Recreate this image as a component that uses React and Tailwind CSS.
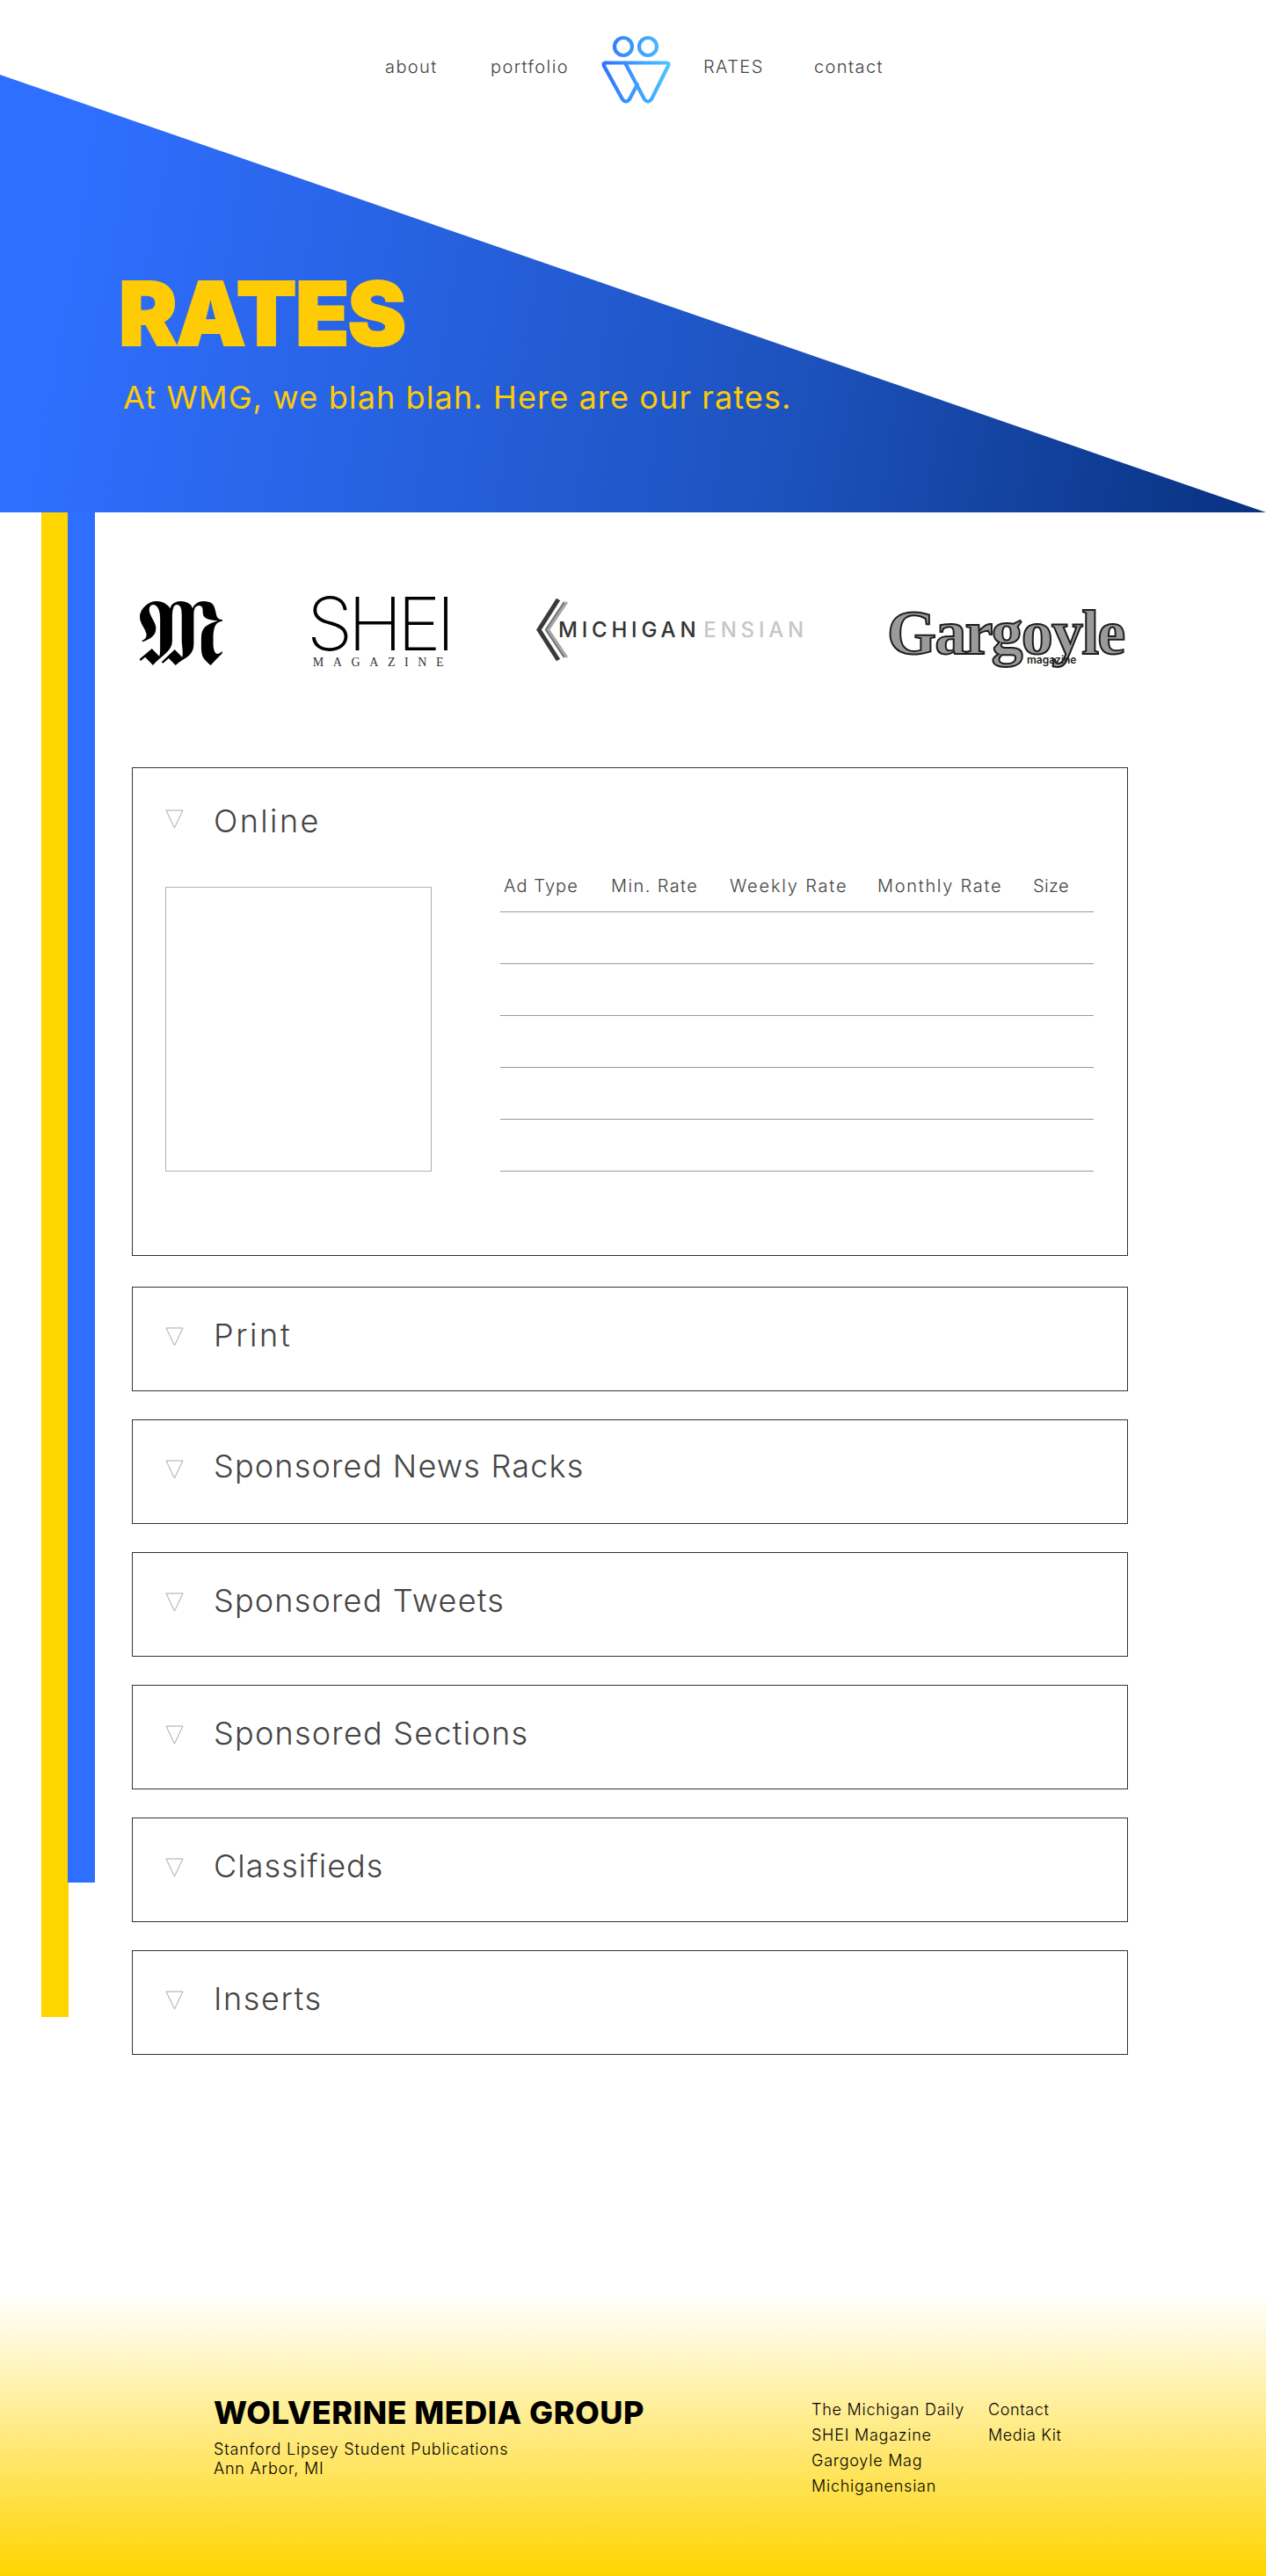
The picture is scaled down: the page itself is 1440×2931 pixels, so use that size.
const navFont = "font-['Inter','Liberation_Sans',sans-serif]";

const sections = [
  { name: "Print", titleClass: "pt-[32px] tracking-[2.6px]" },
  { name: "Sponsored News Racks", titleClass: "pt-[30px] tracking-[1.2px]" },
  { name: "Sponsored Tweets", titleClass: "pt-[32px] tracking-[1.2px]" },
  { name: "Sponsored Sections", titleClass: "pt-[32px] tracking-[1.25px]" },
  { name: "Classifieds", titleClass: "pt-[32px] tracking-[1.05px]" },
  { name: "Inserts", titleClass: "pt-[32px] tracking-[1.6px]" },
];

const columns = [
  { label: "Ad Type", cls: "tracking-[1.1px]" },
  { label: "Min. Rate", cls: "tracking-[1.4px]" },
  { label: "Weekly Rate", cls: "tracking-[1.8px]" },
  { label: "Monthly Rate", cls: "tracking-[1.7px]" },
  { label: "Size", cls: "tracking-[0.4px]" },
];

function WmgLogo() {
  return (
    <svg width="81" height="79" viewBox="0 0 81 79" fill="none">
      <defs>
        <linearGradient id="wmg" gradientUnits="userSpaceOnUse" x1="0" y1="0" x2="81" y2="0">
          <stop offset="0" stopColor="#2f6fff" />
          <stop offset="1" stopColor="#4fc8ff" />
        </linearGradient>
      </defs>
      <g stroke="url(#wmg)" strokeWidth="4.2" strokeLinejoin="round" strokeLinecap="round">
        <circle cx="26" cy="13" r="10" />
        <circle cx="54" cy="13" r="10" />
        <path d="M6 31.5H75Q78.5 31.5 77.2 34.5L58 73Q54 78 50 73L28 31.5" />
        <path d="M6 31.5Q2.5 31.5 4 35L25 73Q29 78 33 73L42 56" />
      </g>
    </svg>
  );
}

function Arrow() {
  return (
    <svg width="21" height="22" viewBox="0 0 21 22" fill="none" className="shrink-0">
      <path d="M1 1H20L10.5 21Z" stroke="#a8a8a8" strokeWidth="1" />
    </svg>
  );
}

function Chevron() {
  return (
    <svg width="36" height="72" viewBox="0 0 36 72" fill="none" className="shrink-0">
      <path d="M25 1L3 35.5L25 70" stroke="#3a3a3a" strokeWidth="5" />
      <path d="M32 4L11 35.5L32 67" stroke="#777777" strokeWidth="2.4" />
      <path d="M35 4L14 35.5L35 67" stroke="#a5a5a5" strokeWidth="2.4" />
    </svg>
  );
}

function Logos() {
  return (
    <div className="flex items-center h-[84px] pl-[8px]">
      <div className="w-[96px] h-[84px] flex items-center justify-center text-[106px] leading-[84px] text-black font-['DejaVu_Sans','DejaVu_Serif',serif]">
        𝕸
      </div>
      <div className="ml-[99px] w-[155px] flex flex-col items-center">
        <div className="text-[84px] leading-[62px] tracking-[-5.5px] font-extralight text-black font-['Inter',sans-serif]">
          SHEI
        </div>
        <div className="mt-[5px] text-[14px] leading-[15px] tracking-[10.6px] mr-[-10px] text-[#333] font-['Liberation_Serif',serif]">
          MAGAZINE
        </div>
      </div>
      <div className="ml-[102px] w-[306px] h-[72px] mb-[6px] flex items-center">
        <Chevron />
        <div className="-ml-[11px] text-[24px] leading-[28px] tracking-[4.8px] font-medium text-[#333] font-['Inter',sans-serif] whitespace-nowrap">
          MICHIGAN<span className="ml-[4px] text-[#c6c6c6]">ENSIAN</span>
        </div>
      </div>
      <div className="relative ml-[93px] w-[269px] h-[60px] mt-[2px]">
        <div className="text-[72px] leading-[58px] tracking-[-1.8px] font-bold text-[#9a9a9a] whitespace-nowrap font-['Liberation_Serif',serif] [-webkit-text-stroke:2px_#1c1c1c]">
          Gargoyle
        </div>
        <div className="absolute left-[159px] top-[54px] text-[12px] leading-[12px] font-semibold text-[#222] font-['Inter',sans-serif]">
          magazine
        </div>
      </div>
    </div>
  );
}

function RatesTable() {
  return (
    <div className="ml-[78px] w-[675px]">
      <div className="grid grid-cols-[122px_135px_168px_177px_1fr] pl-[4px] pt-[4px] h-[48px] border-b border-[#999] text-[20px] leading-[28px] text-[#444] font-light whitespace-nowrap">
        {columns.map((c) => (
          <div key={c.label} className={c.cls}>
            {c.label}
          </div>
        ))}
      </div>
      {[1, 2, 3, 4, 5].map((r) => (
        <div key={r} className="h-[59px] border-b border-[#999]" />
      ))}
    </div>
  );
}

export default function App() {
  return (
    <div className={`w-[1440px] bg-white ${navFont}`}>
      <section className="relative h-[583px]">
        <div className="absolute inset-0 bg-[linear-gradient(100deg,#2f6fff_8%,#1d52bd_64%,#08317f_100%)] [clip-path:polygon(0_85px,100%_100%,0_100%)]" />
        <div className="relative">
          <nav className="grid grid-cols-[120px_125px_117px_126px_80px] ml-[438px] pt-[40px] text-[20px] leading-[28px] font-light text-[#444] tracking-[1.4px]">
            <a className="pt-[22px]">about</a>
            <a className="pt-[22px]">portfolio</a>
            <div>
              <WmgLogo />
            </div>
            <a className="pt-[22px]">RATES</a>
            <a className="pt-[22px]">contact</a>
          </nav>
          <h1 className="ml-[135px] mt-[188px] text-[100px] leading-[100px] font-black tracking-[-1.6px] text-[#ffcb05] [-webkit-text-stroke:2px_#ffcb05]">
            RATES
          </h1>
          <p className="ml-[140px] mt-[23px] text-[36px] leading-[44px] tracking-[1.12px] text-[#ffcb05]">
            At WMG, we blah blah. Here are our rates.
          </p>
        </div>
      </section>

      <main className="flex items-start pb-[272px]">
        <div className="flex items-start ml-[47px]">
          <div className="w-[31px] h-[1712px] bg-[#ffd500]" />
          <div className="w-[31px] h-[1559px] -ml-px bg-[#2f6fff]" />
        </div>
        <div className="ml-[42px] w-[1133px]">
          <div className="pt-[95px] h-[290px]">
            <Logos />
          </div>
          <div className="flex flex-col gap-[32px] text-[#444]">
            <div className="h-[556px] mb-[3px] border border-[#333]">
              <div className="h-[116px] flex pl-[37px]">
                <div className="pt-[47px]">
                  <Arrow />
                </div>
                <h2 className="ml-[34px] pt-[38px] h-fit text-[36px] leading-[44px] font-light tracking-[2.4px]">
                  Online
                </h2>
              </div>
              <div className="flex items-start pl-[37px]">
                <div className="mt-[19px] w-[303px] h-[324px] border border-[#b0b0b0]" />
                <RatesTable />
              </div>
            </div>
            {sections.map((s) => (
              <div key={s.name} className="h-[119px] flex pl-[37px] border border-[#333]">
                <div className="pt-[45px]">
                  <Arrow />
                </div>
                <h2 className={`ml-[34px] h-fit text-[36px] leading-[44px] font-light ${s.titleClass}`}>
                  {s.name}
                </h2>
              </div>
            ))}
          </div>
        </div>
      </main>

      <footer className="h-[321px] flex pl-[243px] bg-[linear-gradient(180deg,#ffffff_0%,#ffd500_100%)] text-black">
        <div className="w-[680px] pt-[113px]">
          <div className="text-[36px] leading-[44px] font-extrabold tracking-[0.5px]">WOLVERINE MEDIA GROUP</div>
          <div className="mt-[9px] text-[18px] leading-[22px] tracking-[0.8px] font-light">
            <div>Stanford Lipsey Student Publications</div>
            <div>Ann Arbor, MI</div>
          </div>
        </div>
        <div className="w-[201px] pt-[117px] text-[18px] leading-[29px] tracking-[0.75px] font-light">
          <div>The Michigan Daily</div>
          <div>SHEI Magazine</div>
          <div>Gargoyle Mag</div>
          <div>Michiganensian</div>
        </div>
        <div className="pt-[117px] text-[18px] leading-[29px] tracking-[0.6px] font-light">
          <div>Contact</div>
          <div>Media Kit</div>
        </div>
      </footer>
    </div>
  );
}
